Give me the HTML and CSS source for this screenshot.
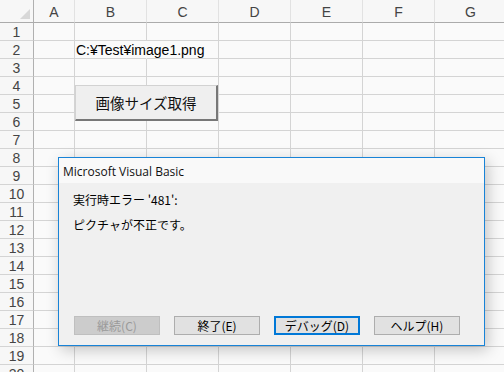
FILE: index.html
```html
<!DOCTYPE html>
<html lang="ja">
<head>
<meta charset="utf-8">
<link rel="stylesheet" href="styles.css">
</head>
<body>
<div class="sheet">
  <div class="corner"><span class="tri"></span></div>
  <div class="colhead">A</div><div class="colhead">B</div><div class="colhead">C</div><div class="colhead">D</div><div class="colhead">E</div><div class="colhead">F</div><div class="colhead">G</div>

  <div class="rowhead">1</div><div class="cell"></div><div class="cell"></div><div class="cell"></div><div class="cell"></div><div class="cell"></div><div class="cell"></div><div class="cell"></div>
  <div class="rowhead">2</div><div class="cell"></div><div class="cell text noright">C:¥Test¥image1.png</div><div class="cell"></div><div class="cell"></div><div class="cell"></div><div class="cell"></div><div class="cell"></div>
  <div class="rowhead">3</div><div class="cell"></div><div class="cell"></div><div class="cell"></div><div class="cell"></div><div class="cell"></div><div class="cell"></div><div class="cell"></div>
  <div class="rowhead">4</div><div class="cell"></div><div class="cell"></div><div class="cell"></div><div class="cell"></div><div class="cell"></div><div class="cell"></div><div class="cell"></div>
  <div class="rowhead">5</div><div class="cell"></div><div class="cell"></div><div class="cell"></div><div class="cell"></div><div class="cell"></div><div class="cell"></div><div class="cell"></div>
  <div class="rowhead">6</div><div class="cell"></div><div class="cell"></div><div class="cell"></div><div class="cell"></div><div class="cell"></div><div class="cell"></div><div class="cell"></div>
  <div class="rowhead">7</div><div class="cell"></div><div class="cell"></div><div class="cell"></div><div class="cell"></div><div class="cell"></div><div class="cell"></div><div class="cell"></div>
  <div class="rowhead">8</div><div class="cell"></div><div class="cell"></div><div class="cell"></div><div class="cell"></div><div class="cell"></div><div class="cell"></div><div class="cell"></div>
  <div class="rowhead">9</div><div class="cell"></div><div class="cell"></div><div class="cell"></div><div class="cell"></div><div class="cell"></div><div class="cell"></div><div class="cell"></div>
  <div class="rowhead">10</div><div class="cell"></div><div class="cell"></div><div class="cell"></div><div class="cell"></div><div class="cell"></div><div class="cell"></div><div class="cell"></div>
  <div class="rowhead">11</div><div class="cell"></div><div class="cell"></div><div class="cell"></div><div class="cell"></div><div class="cell"></div><div class="cell"></div><div class="cell"></div>
  <div class="rowhead">12</div><div class="cell"></div><div class="cell"></div><div class="cell"></div><div class="cell"></div><div class="cell"></div><div class="cell"></div><div class="cell"></div>
  <div class="rowhead">13</div><div class="cell"></div><div class="cell"></div><div class="cell"></div><div class="cell"></div><div class="cell"></div><div class="cell"></div><div class="cell"></div>
  <div class="rowhead">14</div><div class="cell"></div><div class="cell"></div><div class="cell"></div><div class="cell"></div><div class="cell"></div><div class="cell"></div><div class="cell"></div>
  <div class="rowhead">15</div><div class="cell"></div><div class="cell"></div><div class="cell"></div><div class="cell"></div><div class="cell"></div><div class="cell"></div><div class="cell"></div>
  <div class="rowhead">16</div><div class="cell"></div><div class="cell"></div><div class="cell"></div><div class="cell"></div><div class="cell"></div><div class="cell"></div><div class="cell"></div>
  <div class="rowhead">17</div><div class="cell"></div><div class="cell"></div><div class="cell"></div><div class="cell"></div><div class="cell"></div><div class="cell"></div><div class="cell"></div>
  <div class="rowhead">18</div><div class="cell"></div><div class="cell"></div><div class="cell"></div><div class="cell"></div><div class="cell"></div><div class="cell"></div><div class="cell"></div>
  <div class="rowhead">19</div><div class="cell"></div><div class="cell"></div><div class="cell"></div><div class="cell"></div><div class="cell"></div><div class="cell"></div><div class="cell"></div>
  <div class="rowhead">20</div><div class="cell"></div><div class="cell"></div><div class="cell"></div><div class="cell"></div><div class="cell"></div><div class="cell"></div><div class="cell"></div>
</div>

<div class="shape-btn">画像サイズ取得</div>

<div class="dialog">
  <div class="titlebar">Microsoft Visual Basic</div>
  <div class="dbody">
    <div class="msg">実行時エラー '481':</div>
    <div class="msg">ピクチャが不正です。</div>
    <div class="btnrow">
      <div class="dbtn disabled">継続(C)</div>
      <div class="dbtn">終了(E)</div>
      <div class="dbtn focus">デバッグ(D)</div>
      <div class="dbtn">ヘルプ(H)</div>
    </div>
  </div>
</div>
</body>
</html>
```

FILE: styles.css
```css
html, body {
  margin: 0;
  padding: 0;
  width: 504px;
  height: 372px;
  overflow: hidden;
  background: #fafafa;
}

.sheet {
  display: grid;
  grid-template-columns: 34px 41px 72px 72px 72px 72px 72px 72px;
  grid-template-rows: 23px repeat(20, 18px);
  width: 507px;
  font-family: "Liberation Sans", Arial, sans-serif;
}

.corner {
  background: #f7f7f7;
  border-right: 1px solid #b0b0b0;
  border-bottom: 1px solid #ababab;
  display: flex;
  justify-content: flex-end;
  align-items: flex-end;
  padding: 0 3px 3px 0;
}

.tri {
  width: 0;
  height: 0;
  border-left: 10px solid transparent;
  border-bottom: 10px solid #d8d8d8;
}

.colhead {
  background: #f7f7f7;
  border-right: 1px solid #e2e2e2;
  border-bottom: 1px solid #ababab;
  display: flex;
  align-items: center;
  justify-content: center;
  font-size: 14px;
  color: #444;
  padding-top: 1px;
}

.rowhead {
  background: #f7f7f7;
  border-right: 1px solid #b0b0b0;
  border-bottom: 1px solid #d4d4d4;
  display: flex;
  align-items: center;
  justify-content: center;
  font-size: 14px;
  color: #444;
  padding-top: 1px;
}

.cell {
  background: #fafafa;
  border-right: 1px solid #d4d4d4;
  border-bottom: 1px solid #d4d4d4;
}

.cell.noright {
  border-right-color: #fafafa;
}

.cell.text {
  white-space: nowrap;
  overflow: visible;
  position: relative;
  z-index: 1;
  font-size: 14px;
  color: #000;
  line-height: 18px;
  padding-left: 1px;
}

.shape-btn {
  position: absolute;
  left: 75px;
  top: 85px;
  width: 143px;
  height: 36px;
  box-sizing: border-box;
  background: #efefef;
  border-top: 1px solid #d2d2d2;
  border-left: 1px solid #d2d2d2;
  border-right: 2px solid #777;
  border-bottom: 2px solid #777;
  display: flex;
  align-items: center;
  justify-content: center;
  font-family: "Noto Sans CJK JP", sans-serif;
  font-size: 14.5px;
  color: #111;
}

.dialog {
  position: absolute;
  left: 58px;
  top: 157px;
  width: 427px;
  height: 189px;
  box-sizing: border-box;
  border: 1px solid #1883d7;
  background: #f0f0f0;
  box-shadow: 3px 4px 14px rgba(0, 0, 0, 0.22);
  display: flex;
  flex-direction: column;
}

.titlebar {
  height: 25px;
  background: #f9f9f9;
  font-family: "Open Sans", "Noto Sans", sans-serif;
  font-size: 12px;
  color: #111;
  display: flex;
  align-items: center;
  padding-left: 4px;
  padding-top: 1px;
  box-sizing: border-box;
}

.dbody {
  flex: 1;
  display: flex;
  flex-direction: column;
  padding: 4px 0 10px 14px;
  font-family: "Noto Sans CJK JP", sans-serif;
  font-size: 12px;
  color: #000;
}

.msg {
  line-height: 25px;
  height: 25px;
}

.btnrow {
  margin-top: auto;
  display: flex;
  gap: 14px;
  padding-left: 1px;
}

.dbtn {
  width: 86px;
  height: 19px;
  box-sizing: border-box;
  background: #e1e1e1;
  border: 1px solid #adadad;
  display: flex;
  align-items: center;
  justify-content: center;
  font-size: 12px;
  color: #000;
}

.dbtn.disabled {
  background: #cccccc;
  border-color: #bfbfbf;
  color: #9a9a9a;
}

.dbtn.focus {
  border: 2px solid #0078d7;
}
```
